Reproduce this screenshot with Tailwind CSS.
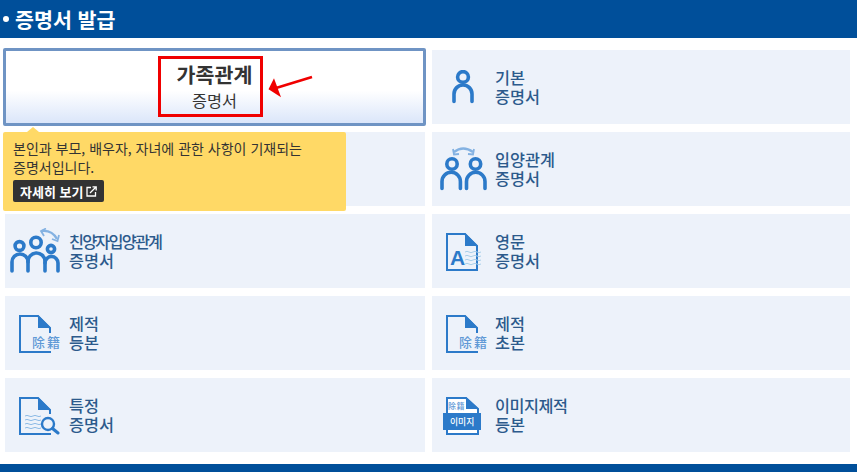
<!DOCTYPE html>
<html lang="ko">
<head>
  <meta charset="UTF-8">
  <title>증명서 발급</title>
  <script src="https://cdn.jsdelivr.net/npm/@tailwindcss/browser@4"></script>
</head>
<body class="bg-white w-[857px] h-[472px] overflow-hidden font-['Noto_Sans_CJK_KR','Noto_Sans',sans-serif]">
  <!-- 제목 -->
  <header class="h-[38px] bg-[#004f9a] flex items-center pl-[3px] text-white text-[20.6px] font-bold gap-[6px]">
    <span class="w-[6px] h-[6px] rounded-full bg-white"></span>
    <h1>증명서 발급</h1>
  </header>

  <!-- 증명서 목록 -->
  <main class="relative grid grid-cols-[420px_418px] gap-x-[7px] gap-y-[8px] pl-[5px] pt-[12px] auto-rows-[74px] text-[16.3px] leading-[19px] text-[#2c5a8c] font-medium">
    <!-- 선택된 항목 -->
    <a href="#" class="relative -mx-[2px] -my-[2px] h-[78px] w-[423px] border-[3px] border-[#6f94c4] rounded-[2px] bg-linear-to-b from-white from-55% to-[#dbe6fa] flex flex-col items-center justify-center text-[#333]">
      <span class="text-[20.6px] leading-[24px] font-bold mt-[-1px]">가족관계</span>
      <span class="text-[16.3px] leading-[22px] mt-[3px] font-normal">증명서</span>
      <span class="absolute left-[152px] top-[5px] w-[105px] h-[61px] border-[3px] border-[#f00000]"></span>
      <svg class="absolute left-[262px] top-[22px]" width="50" height="26" viewBox="0 0 50 26">
        <path d="M8 15 L44 4" stroke="#f00000" stroke-width="2.6" fill="none"/>
        <path d="M.5 16.3 L6 5.3 L13 24.3 Z" fill="#f00000"/>
      </svg>
    </a>

    <a href="#" class="bg-[#edf2fa] flex items-center">
      <svg class="ml-[19px] w-[24px] h-[34px]" viewBox="0 0 24 34" fill="none" stroke="#2c7ac9" stroke-width="3.6">
        <circle cx="12" cy="7" r="5.4"/>
        <path d="M3 31.5 V24 A9 9 0 0 1 21 24 V31.5" stroke-linecap="round"/>
      </svg>
      <span class="ml-[20px]">기본<br>증명서</span>
    </a>

    <!-- 가려진 항목 -->
    <a href="#" class="bg-[#edf2fa]"></a>

    <a href="#" class="bg-[#edf2fa] flex items-center">
      <svg class="ml-[8px] w-[47px] h-[46px]" viewBox="0 0 47 46" fill="none">
        <path d="M14 6 Q23 -1 33 6" stroke="#84b2e2" stroke-width="2.4"/>
        <path d="M13 3 L14 8.5 L19 8 M34 3 L33 8.5 L28 8" stroke="#84b2e2" stroke-width="1.8"/>
        <g stroke="#2c7ac9" stroke-width="3.6">
          <circle cx="12" cy="18" r="5.2"/>
          <path d="M2 42.5 V35.5 A9.2 9.2 0 0 1 20.4 35.5 V42.5" stroke-linecap="round"/>
          <circle cx="35.5" cy="18" r="5.2"/>
          <path d="M26.5 42.5 V35.5 A9.2 9.2 0 0 1 45 35.5 V42.5" stroke-linecap="round"/>
        </g>
      </svg>
      <span class="ml-[8px]">입양관계<br>증명서</span>
    </a>

    <a href="#" class="bg-[#edf2fa] flex items-center">
      <svg class="ml-[5px] w-[52px] h-[46px]" viewBox="0 0 52 46" fill="none">
        <path d="M32 3 Q42 2 47 11" stroke="#84b2e2" stroke-width="2.4"/>
        <path d="M42 11 L47.5 13 L49 7" stroke="#84b2e2" stroke-width="1.8"/>
        <path d="M36 .5 L31 3 L34 8" stroke="#84b2e2" stroke-width="1.8"/>
        <g stroke="#2c7ac9" stroke-width="3.6">
          <circle cx="9.5" cy="18" r="4.4"/>
          <circle cx="26" cy="14.5" r="5.2"/>
          <circle cx="41" cy="21" r="3.6"/>
          <path d="M2 43 V34 A8 8 0 0 1 18 34 V43" stroke-linecap="round"/>
          <path d="M18 34 A8.5 8.5 0 0 1 35 33 V43" stroke-linecap="round"/>
          <path d="M35 35 A6.5 6.5 0 0 1 48 35 V43" stroke-linecap="round"/>
        </g>
      </svg>
      <span class="ml-[7px] tracking-[-1.8px]">친양자입양관계<br><span class="tracking-normal">증명서</span></span>
    </a>

    <a href="#" class="bg-[#edf2fa] flex items-center">
      <svg class="ml-[14px] w-[40px] h-[40px] overflow-visible" viewBox="0 0 40 40" fill="none">
        <path d="M1 3 H19 L31 15 V39 H1 Z" stroke="#2c7ac9" stroke-width="2"/>
        <path d="M19 2 L32 15 H19 Z" fill="#2c7ac9"/>
        <text x="4" y="34" font-size="21" font-weight="700" fill="#2c7ac9" font-family="Liberation Sans">A</text>
        <path d="M19 21 q2 -1.4 4 0 t4 0 t4 0 t4 0 M19 25 q2 -1.4 4 0 t4 0 t4 0 t4 0 M19 29 q2 -1.4 4 0 t4 0 t4 0 t4 0 M19 33 q2 -1.4 4 0 t4 0 t4 0 t4 0" stroke="#a9d0ea" stroke-width="1"/>
      </svg>
      <span class="ml-[9px]">영문<br>증명서</span>
    </a>

    <a href="#" class="bg-[#edf2fa] flex items-center">
      <svg class="ml-[14px] w-[46px] h-[40px]" viewBox="0 0 46 40" fill="none">
        <path d="M31 20 V15 L19 3 H1 V39 H32" stroke="#2c7ac9" stroke-width="2"/>
        <path d="M19 2 L32 15 H19 Z" fill="#2c7ac9"/>
        <text x="13" y="33.5" font-size="13" letter-spacing="2" fill="#5f99d6" font-family="Noto Sans CJK KR">除籍</text>
      </svg>
      <span class="ml-[4px]">제적<br>등본</span>
    </a>

    <a href="#" class="bg-[#edf2fa] flex items-center">
      <svg class="ml-[14px] w-[46px] h-[40px]" viewBox="0 0 46 40" fill="none">
        <path d="M31 20 V15 L19 3 H1 V39 H32" stroke="#2c7ac9" stroke-width="2"/>
        <path d="M19 2 L32 15 H19 Z" fill="#2c7ac9"/>
        <text x="13" y="33.5" font-size="13" letter-spacing="2" fill="#5f99d6" font-family="Noto Sans CJK KR">除籍</text>
      </svg>
      <span class="ml-[3px]">제적<br>초본</span>
    </a>

    <a href="#" class="bg-[#edf2fa] flex items-center">
      <svg class="ml-[14px] w-[46px] h-[40px]" viewBox="0 0 46 40" fill="none">
        <path d="M31 19 V15 L19 3 H1 V39 H32" stroke="#2c7ac9" stroke-width="2"/>
        <path d="M19 2 L32 15 H19 Z" fill="#2c7ac9"/>
        <path d="M6 21 q2 -1.2 4 0 t4 0 t4 0 t4 0 M6 25 q2 -1.2 4 0 t4 0 t4 0 t4 0 M6 29 q2 -1.2 4 0 t4 0 t4 0 t4 0 M6 33 q2 -1.2 4 0 t4 0 t4 0 t4 0" stroke="#8dbbe6" stroke-width="1"/>
        <circle cx="29" cy="29" r="6" stroke="#2c7ac9" stroke-width="2.4" fill="#edf2fa"/>
        <path d="M33.5 33.5 L39 38" stroke="#2c7ac9" stroke-width="3" stroke-linecap="round"/>
      </svg>
      <span class="ml-[4px]">특정<br>증명서</span>
    </a>

    <a href="#" class="bg-[#edf2fa] flex items-center">
      <svg class="ml-[11px] w-[40px] h-[40px]" viewBox="0 0 40 40" fill="none">
        <path d="M4 3 H23 L35 14 V39 H4 Z" fill="#fff" stroke="#2c7ac9" stroke-width="2"/>
        <path d="M23 2 L36 14 H23 Z" fill="#2c7ac9"/>
        <text x="5" y="14" font-size="8" letter-spacing=".5" fill="#5f99d6" font-family="Noto Sans CJK KR">除籍</text>
        <rect x="0" y="18" width="38" height="17" fill="#2c7ac9"/>
        <text x="7" y="30" font-size="8.8" font-weight="500" fill="#fff" font-family="Noto Sans CJK KR">이미지</text>
      </svg>
      <span class="ml-[12px] tracking-[-.5px]">이미지제적<br><span class="tracking-normal">등본</span></span>
    </a>

    <!-- 안내 말풍선 -->
    <div class="absolute left-[3px] top-[94px] w-[343px] h-[79px] bg-[#ffd966] rounded-[2px] pl-[10px] pt-[7px] text-[14px] leading-[19px] text-[#333] font-normal">
      <span class="absolute left-[24px] -top-[5px] w-0 h-0 border-x-[6px] border-x-transparent border-b-[5px] border-b-[#ffd966]"></span>
      <p>본인과 부모, 배우자, 자녀에 관한 사항이 기재되는<br>증명서입니다.</p>
      <a href="#" class="mt-[3px] w-[91px] h-[22px] bg-[#333] rounded-[2px] text-white text-[13px] font-bold flex items-center pl-[7px] gap-[3px]">
        자세히 보기
        <svg width="11" height="11" viewBox="0 0 11 11" fill="none" stroke="#fff" stroke-width="1.3">
          <path d="M5 1.5 H1 V10 H9.5 V6"/>
          <path d="M4 7 L10 1 M6.5 .8 H10.2 V4.5"/>
        </svg>
      </a>
    </div>
  </main>

  <footer class="absolute left-0 top-[464px] w-[857px] h-[8px] bg-[#004f9a]"></footer>
</body>
</html>
